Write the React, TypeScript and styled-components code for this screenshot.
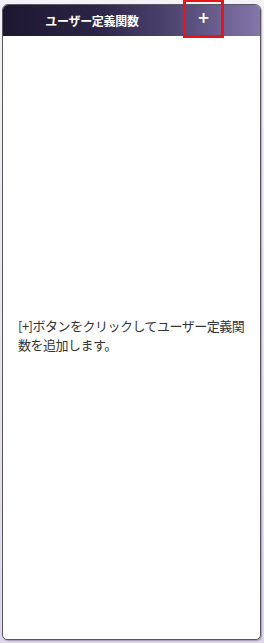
import { FC } from 'react';
import styled, { createGlobalStyle } from 'styled-components';

const GlobalStyle = createGlobalStyle`
  html, body {
    margin: 0;
    padding: 0;
    height: 100%;
  }
  body {
    background: linear-gradient(#f4f2f8, #ddd6ec);
    font-family: "Noto Sans CJK JP", "Noto Sans", sans-serif;
  }
  #root {
    height: 100%;
  }
`;

const Page = styled.div`
  box-sizing: border-box;
  height: 643px;
  padding: 4px 3px 3px 2px;
  display: flex;
`;

const Panel = styled.div`
  flex: 1;
  display: flex;
  flex-direction: column;
  position: relative;
  border: 1px solid #5a5760;
  border-radius: 6px 6px 5px 5px;
  background: #fff;
  box-shadow: 1px 1px 1px rgba(60, 50, 80, 0.35);
`;

const Header = styled.div`
  height: 31px;
  display: flex;
  align-items: center;
  border-radius: 5px 5px 0 0;
  background: linear-gradient(90deg, #1d1830 0%, #2a2344 35%, #4d4470 65%, #8376aa 100%);
`;

const Title = styled.div`
  width: 178px;
  text-align: center;
  color: #fff;
  font-size: 12px;
  font-weight: 700;
  letter-spacing: -0.3px;
`;

const AddButton = styled.button`
  position: absolute;
  left: 180px;
  top: -6px;
  margin: 0;
  width: 41px;
  height: 39px;
  box-sizing: border-box;
  border: 3px solid #e8141c;
  background: transparent;
  color: #fff;
  font-size: 15px;
  font-weight: 700;
  font-family: "DejaVu Sans", sans-serif;
  padding: 0 0 1px;
  display: flex;
  align-items: center;
  justify-content: center;
  cursor: pointer;
`;

const Body = styled.div`
  flex: 1;
  display: flex;
  align-items: center;
  padding: 0 8px 6px 15px;
`;

const Message = styled.p`
  margin: 0;
  color: #333;
  font-size: 13px;
  line-height: 19px;
  letter-spacing: -0.5px;
`;

const App: FC = () => {
  return (
    <>
      <GlobalStyle />
      <Page>
        <Panel>
          <Header>
            <Title>ユーザー定義関数</Title>
          </Header>
          <AddButton aria-label='追加'>+</AddButton>
          <Body>
            <Message>
              [+]ボタンをクリックしてユーザー定義関数を追加します。
            </Message>
          </Body>
        </Panel>
      </Page>
    </>
  );
};

export default App;
